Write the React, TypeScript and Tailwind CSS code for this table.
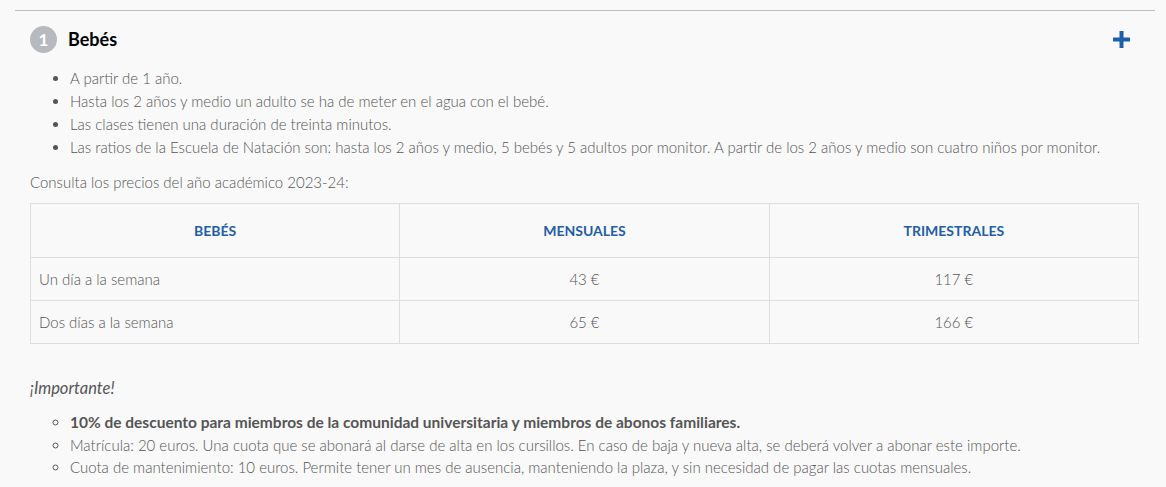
const rows = [
  { name: 'Un día a la semana', month: '43 €', quarter: '117 €' },
  { name: 'Dos días a la semana', month: '65 €', quarter: '166 €' },
];

const App = () => {
  return (
    <div className="min-h-[487px] bg-[#f9f9f9] pl-[15px] pr-[11px] pt-[10px] text-[15px] font-light leading-[23px] text-[#555]" style={{ fontFamily: 'Lato, "Open Sans", sans-serif' }}>
      <div className="border-t border-[#b9bdc4]">
        <div className="flex items-center justify-between pl-[15px] pr-[24px] pt-[15px]">
          <div className="flex items-center gap-[11px]">
            <span className="flex h-[27px] w-[27px] items-center justify-center rounded-full bg-[#b6b9be] text-[17px] font-bold text-white">1</span>
            <h3 className="text-[18px] font-bold text-black">Bebés</h3>
          </div>
          <svg width="17" height="17" viewBox="0 0 17 17" className="mr-[1px]">
            <rect x="6.5" y="0" width="4" height="17" fill="#1f5ea8" />
            <rect x="0" y="6.5" width="17" height="4" fill="#1f5ea8" />
          </svg>
        </div>

        <div className="pl-[15px] pr-[16px] pt-[14px]">
          <ul className="list-disc pl-[40px]">
            <li>A partir de 1 año.</li>
            <li>Hasta los 2 años y medio un adulto se ha de meter en el agua con el bebé.</li>
            <li>Las clases tienen una duración de treinta minutos.</li>
            <li>Las ratios de la Escuela de Natación son: hasta los 2 años y medio, 5 bebés y 5 adultos por monitor. A partir de los 2 años y medio son cuatro niños por monitor.</li>
          </ul>
          <p className="mt-[12px]">Consulta los precios del año académico 2023-24:</p>

          <table className="mt-[9px] w-full table-fixed border-collapse border border-[#ddd]">
            <thead>
              <tr className="h-[54px]">
                <th className="border border-[#ddd] text-[14px] font-bold text-[#1f5ea8]">BEBÉS</th>
                <th className="border border-[#ddd] text-[14px] font-bold text-[#1f5ea8]">MENSUALES</th>
                <th className="border border-[#ddd] text-[14px] font-bold text-[#1f5ea8]">TRIMESTRALES</th>
              </tr>
            </thead>
            <tbody>
              {rows.map((r) => (
                <tr key={r.name} className="h-[43px]">
                  <td className="border border-[#ddd] px-[8px]">{r.name}</td>
                  <td className="border border-[#ddd] text-center">{r.month}</td>
                  <td className="border border-[#ddd] text-center">{r.quarter}</td>
                </tr>
              ))}
            </tbody>
          </table>

          <p className="mt-[33px] text-[16.5px] font-normal italic">¡Importante!</p>
          <ul className="mt-[11px] list-[circle] pl-[40px] leading-[22.5px]">
            <li className="text-[15.5px] font-bold">10% de descuento para miembros de la comunidad universitaria y miembros de abonos familiares.</li>
            <li>Matrícula: 20 euros. Una cuota que se abonará al darse de alta en los cursillos. En caso de baja y nueva alta, se deberá volver a abonar este importe.</li>
            <li>Cuota de mantenimiento: 10 euros. Permite tener un mes de ausencia, manteniendo la plaza, y sin necesidad de pagar las cuotas mensuales.</li>
          </ul>
        </div>
      </div>
    </div>
  );
};

export default App;
